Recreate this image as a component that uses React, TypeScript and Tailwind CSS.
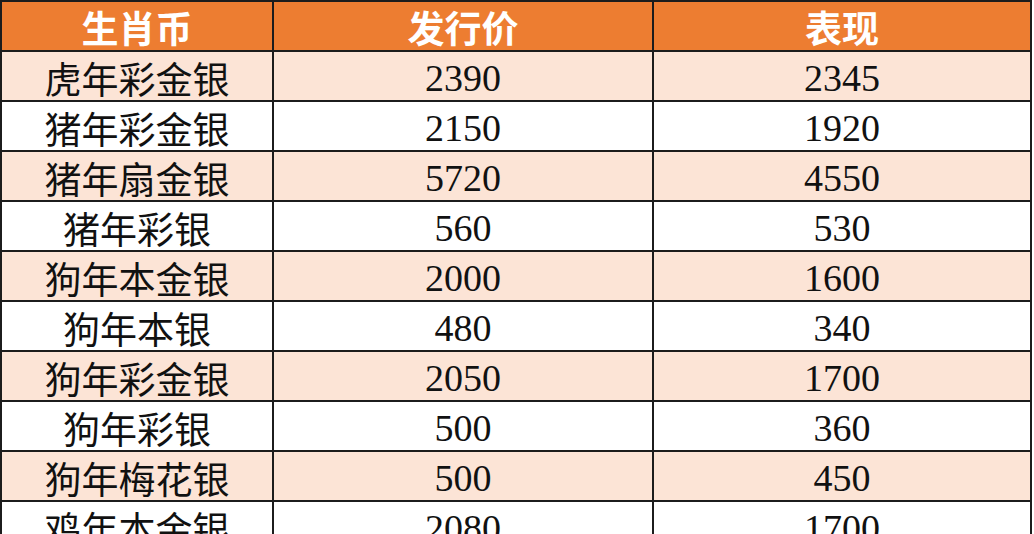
import React from "react";

const rows: [string, string, string][] = [
  ["虎年彩金银", "2390", "2345"],
  ["猪年彩金银", "2150", "1920"],
  ["猪年扇金银", "5720", "4550"],
  ["猪年彩银", "560", "530"],
  ["狗年本金银", "2000", "1600"],
  ["狗年本银", "480", "340"],
  ["狗年彩金银", "2050", "1700"],
  ["狗年彩银", "500", "360"],
  ["狗年梅花银", "500", "450"],
  ["鸡年本金银", "2080", "1700"],
];

export default function App() {
  return (
    <div className="w-[1034px] h-[534px] overflow-hidden bg-white">
      <div className="w-[1032px] bg-[#1c1c1c] pl-[2px] pt-[2px] grid grid-cols-[270px_378px_376px] gap-[2px] auto-rows-[48px]">
        {["生肖币", "发行价", "表现"].map((h) => (
          <div
            key={h}
            className="bg-[#ED7D31] text-white font-bold text-[37px] leading-none flex items-center justify-center pt-[2px] font-['Noto_Sans_CJK_SC','Noto_Sans',sans-serif]"
          >
            {h}
          </div>
        ))}
        {rows.map((r, i) => {
          const peach = i % 2 === 0;
          return (
            <React.Fragment key={i}>
              <div
                className={
                  peach
                    ? "bg-[#FCE4D6] text-[#111] text-[37px] leading-none flex items-center justify-center pt-[4px] font-['Noto_Sans_CJK_SC','Noto_Sans',sans-serif]"
                    : "bg-white text-[#111] text-[37px] leading-none flex items-center justify-center pt-[4px] font-['Noto_Sans_CJK_SC','Noto_Sans',sans-serif]"
                }
              >
                {r[0]}
              </div>
              {[r[1], r[2]].map((v, j) => (
                <div
                  key={j}
                  className={
                    peach
                      ? "bg-[#FCE4D6] text-[#111] text-[38px] leading-none flex items-center justify-center pt-[4px] font-['Liberation_Serif','DejaVu_Serif',serif]"
                      : "bg-white text-[#111] text-[38px] leading-none flex items-center justify-center pt-[4px] font-['Liberation_Serif','DejaVu_Serif',serif]"
                  }
                >
                  {v}
                </div>
              ))}
            </React.Fragment>
          );
        })}
      </div>
    </div>
  );
}
